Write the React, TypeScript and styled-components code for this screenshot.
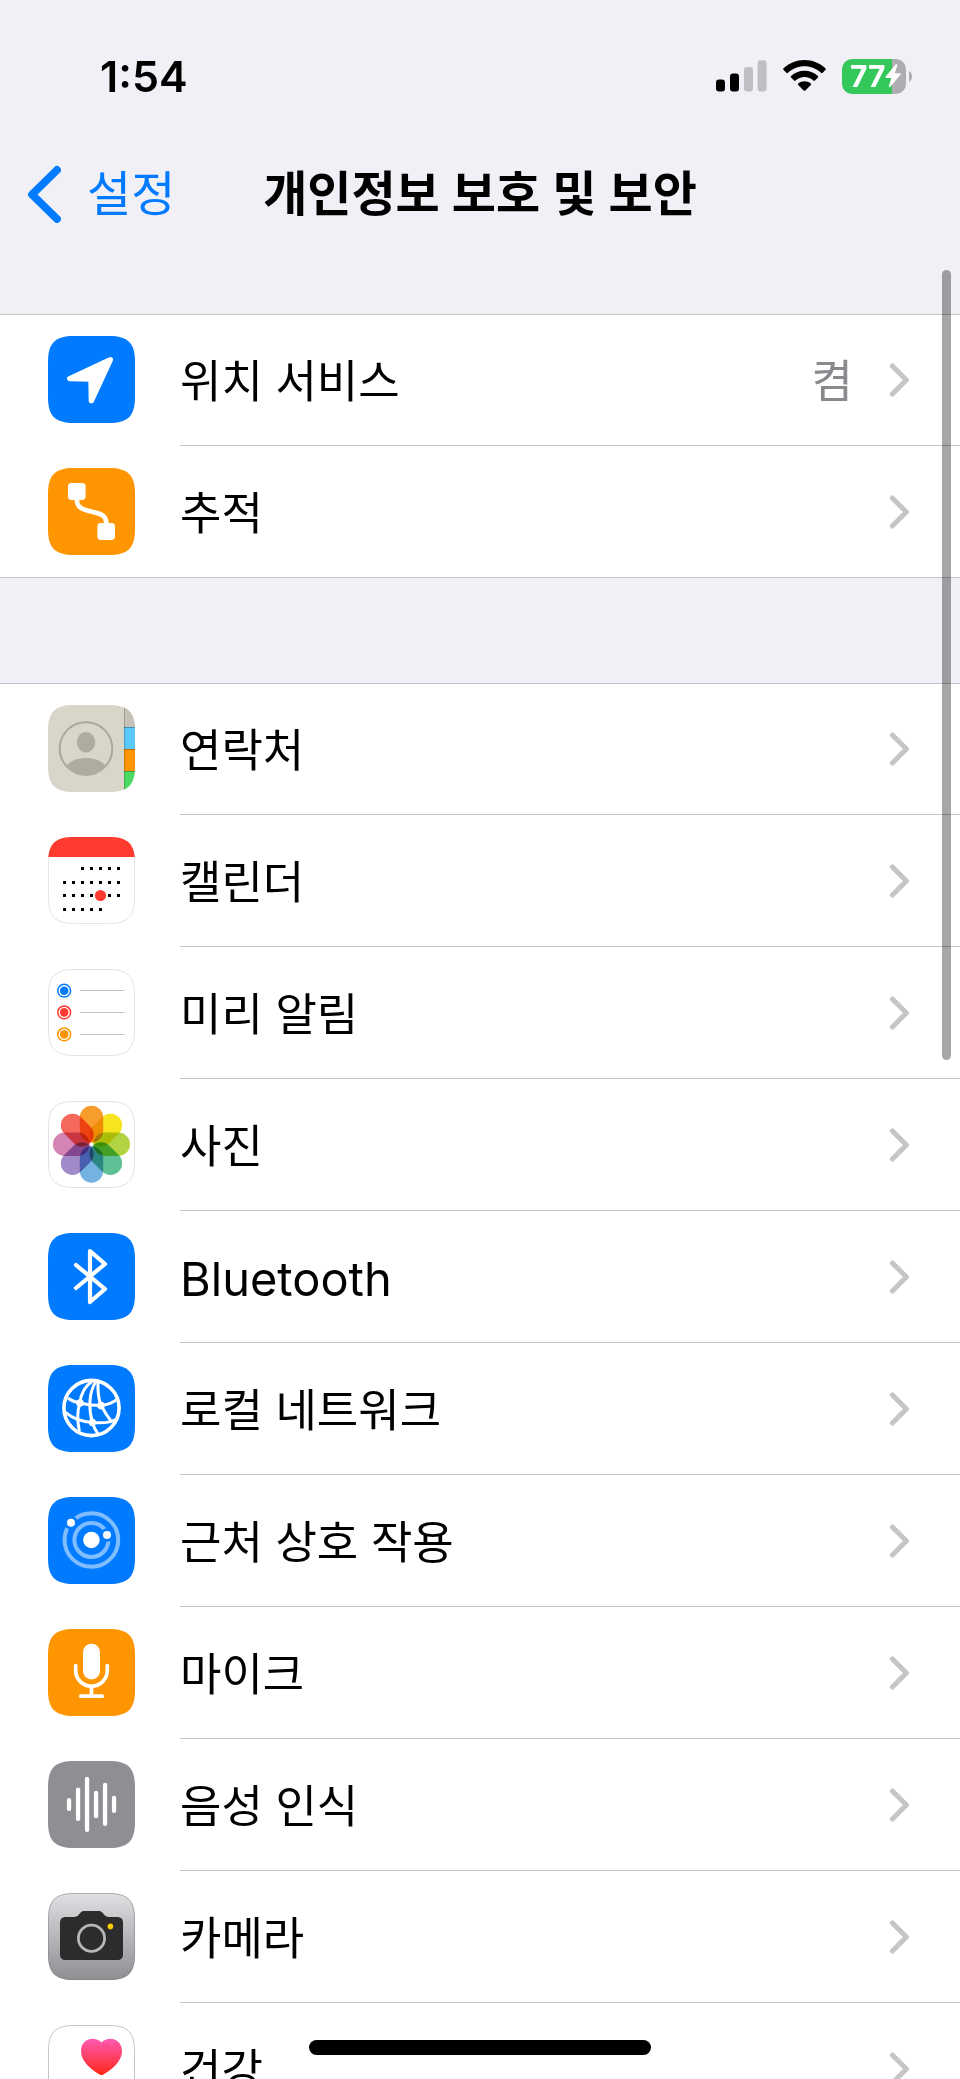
import React from "react";
import styled, { createGlobalStyle } from "styled-components";

const GlobalStyle = createGlobalStyle`
  *, *::before, *::after { box-sizing: border-box; }
  body {
    margin: 0;
    background: #f1f0f6;
    color: #000;
    font-family: Inter, "Noto Sans CJK KR", sans-serif;
  }
`;

const Screen = styled.div`
  position: relative;
  display: flex;
  flex-direction: column;
  height: 100vh;
  overflow: hidden;
`;

const StatusBar = styled.div`
  display: flex;
  align-items: center;
  justify-content: space-between;
  padding: 52px 48px 0 100px;
`;

const Clock = styled.time`
  font-size: 43px;
  line-height: 48px;
  font-weight: 600;
`;

const StatusIcons = styled.div`
  display: flex;
  align-items: center;
  gap: 16px;
`;

const Battery = styled.div`
  display: flex;
  align-items: center;
  gap: 3px;
`;

const BatteryBody = styled.div<{ $level: number }>`
  display: flex;
  align-items: center;
  width: 64px;
  height: 35px;
  padding-left: 8px;
  border-radius: 10px;
  background: linear-gradient(
    to right,
    #34c759 ${(p) => p.$level}%,
    #aeaeb2 ${(p) => p.$level}%
  );
  color: #fff;
  font-size: 30px;
  line-height: 35px;
  font-weight: 700;
`;

const NavBar = styled.header`
  display: grid;
  grid-template-columns: 1fr auto 1fr;
  align-items: center;
  height: 72px;
  margin: 58px 0 84px;
  padding: 0 27px;
`;

const BackLink = styled.a`
  display: flex;
  align-items: center;
  gap: 26px;
  color: #007aff;
  font-size: 48px;
  line-height: 72px;
  text-decoration: none;
`;

const Title = styled.h1`
  margin: 0;
  font-size: 48px;
  line-height: 72px;
  font-weight: 600;
`;

const Content = styled.main`
  display: flex;
  flex: 1;
  flex-direction: column;
  gap: 105px;
  min-height: 0;
  overflow: hidden;
`;

const Group = styled.ul`
  flex: none;
  margin: 0;
  padding: 0;
  list-style: none;
  background: #fff;
  box-shadow: inset 0 1px 0 #c3c3c6;
`;

const Row = styled.li`
  &:last-child > a {
    border-bottom: 1px solid #c3c3c6;
  }
  &:last-child > a > div {
    border-bottom: 0;
  }
`;

const RowLink = styled.a`
  display: flex;
  align-items: stretch;
  gap: 45px;
  height: 132px;
  padding-left: 48px;
  color: inherit;
  text-decoration: none;
`;

const IconTile = styled.svg`
  flex: none;
  width: 87px;
  height: 87px;
  margin-top: 22px;
`;

const RowBody = styled.div`
  display: flex;
  flex: 1;
  align-items: center;
  padding-right: 50px;
  border-bottom: 1px solid #c3c3c6;
`;

const Label = styled.span<{ $latin?: boolean }>`
  flex: 1;
  padding-top: 4px;
  font-size: ${(p) => (p.$latin ? 47 : 45)}px;
  line-height: 66px;
`;

const Value = styled.span`
  margin-right: 36px;
  padding-top: 4px;
  color: #8a8a8e;
  font-size: 45px;
  line-height: 66px;
`;

const ScrollThumb = styled.div`
  position: absolute;
  top: 270px;
  right: 9px;
  width: 9px;
  height: 38%;
  border-radius: 5px;
  background: rgba(0, 0, 0, 0.35);
`;

const HomeIndicator = styled.div`
  position: absolute;
  bottom: 24px;
  left: 50%;
  width: 342px;
  height: 15px;
  margin-left: -171px;
  border-radius: 8px;
  background: #000;
`;

const TILE =
  "M0 26 C0 7 7 0 26 0 H61 C80 0 87 7 87 26 V61 C87 80 80 87 61 87 H26 C7 87 0 80 0 61 Z";
const TILE_EDGE =
  "M.5 26 C.5 7.5 7.5 .5 26 .5 H61 C79.5 .5 86.5 7.5 86.5 26 V61 C86.5 79.5 79.5 86.5 61 86.5 H26 C7.5 86.5 .5 79.5 .5 61 Z";

type TileProps = {
  fill: string;
  edge?: string;
  children: React.ReactNode;
};

function Tile({ fill, edge, children }: TileProps) {
  return (
    <IconTile viewBox="0 0 87 87" aria-hidden="true">
      <path d={TILE} fill={fill} />
      {edge && <path d={TILE_EDGE} fill="none" stroke={edge} />}
      {children}
    </IconTile>
  );
}

const LocationIcon = () => (
  <Tile fill="#007aff">
    <path
      d="M62.4 23.6 L21.8 42.6 L43 43.1 L43.4 64.6 Z"
      fill="#fff"
      stroke="#fff"
      strokeWidth="5.4"
      strokeLinejoin="round"
    />
  </Tile>
);

const TrackingIcon = () => (
  <Tile fill="#ff9500">
    <rect x="20" y="15" width="17.6" height="17" rx="3.4" fill="#fff" />
    <rect x="49.4" y="55" width="17.6" height="17" rx="3.4" fill="#fff" />
    <path
      d="M28.8 31 C28.8 38 32 40.6 39 42.4 L48 44.8 C55 46.6 58.4 49 58.4 56"
      fill="none"
      stroke="#fff"
      strokeWidth="4.6"
    />
  </Tile>
);

const ContactsIcon = () => (
  <Tile fill="#d8d5c9">
    <clipPath id="contacts-tile">
      <path d={TILE} />
    </clipPath>
    <clipPath id="contacts-face">
      <circle cx="38" cy="43.5" r="27" />
    </clipPath>
    <g clipPath="url(#contacts-tile)">
      <rect x="76" y="0" width="11" height="22" fill="#c5c2b8" />
      <rect x="76" y="22" width="11" height="22" fill="#5ac8fa" />
      <rect x="76" y="44" width="11" height="22" fill="#ff9500" />
      <rect x="76" y="66" width="11" height="21" fill="#4cd964" />
      <path d="M76 22.5 H87 M76 44.5 H87 M76 66.5 H87" stroke="#000" strokeOpacity=".28" />
      <path d="M76.5 0 V87" stroke="#000" strokeOpacity=".2" />
    </g>
    <circle cx="38" cy="43.5" r="26.3" fill="none" stroke="#aca79c" strokeWidth="2" />
    <ellipse cx="38" cy="37.3" rx="9.2" ry="10.3" fill="#b0aba0" />
    <path
      d="M18 62 C24 50 52 50 58 62 V74 H18 Z"
      fill="#b0aba0"
      clipPath="url(#contacts-face)"
    />
  </Tile>
);

const CALENDAR_WEEKS = [
  { y: 31.5, from: 2, to: 6 },
  { y: 45.5, from: 0, to: 6 },
  { y: 58.5, from: 0, to: 6 },
  { y: 72.5, from: 0, to: 4 },
];

const CalendarIcon = () => (
  <Tile fill="#fff" edge="#e5e5e7">
    {CALENDAR_WEEKS.map((week) =>
      Array.from({ length: week.to - week.from + 1 }, (_, i) => (
        <rect
          key={`${week.y}-${i}`}
          x={15 + (week.from + i) * 9}
          y={week.y - 1.5}
          width="3"
          height="3"
        />
      ))
    )}
    <circle cx="52.5" cy="58.5" r="5.6" fill="#ff3b30" />
    <clipPath id="calendar-head">
      <rect width="87" height="20" />
    </clipPath>
    <path d={TILE} fill="#ff3b30" clipPath="url(#calendar-head)" />
  </Tile>
);

const REMINDERS = [
  { y: 21.7, color: "#007aff" },
  { y: 43.4, color: "#ff3b30" },
  { y: 65.4, color: "#ff9500" },
];

const RemindersIcon = () => (
  <Tile fill="#fff" edge="#e2e2e4">
    {REMINDERS.map(({ y, color }) => (
      <g key={color}>
        <circle cx="16.2" cy={y} r="6.4" fill="none" stroke={color} strokeWidth="1.5" />
        <circle cx="16.2" cy={y} r="4.3" fill={color} />
        <path d={`M32 ${Math.floor(y) + 0.5} H76.5`} stroke="#c2c2c4" />
      </g>
    ))}
  </Tile>
);

const PETALS = [
  "#f79d2b",
  "#f6e41f",
  "#b2d442",
  "#5fc095",
  "#74b2e2",
  "#a08ac8",
  "#d383b4",
  "#f4695c",
];

const PhotosIcon = () => (
  <Tile fill="#fff" edge="#e2e2e4">
    {PETALS.map((color, i) => (
      <rect
        key={color}
        x="31.8"
        y="4.8"
        width="23.4"
        height="36.6"
        rx="11.7"
        fill={color}
        transform={`rotate(${i * 45} 43.5 43.3)`}
        style={{ mixBlendMode: "multiply" }}
      />
    ))}
  </Tile>
);

const BluetoothIcon = () => (
  <Tile fill="#007aff">
    <path
      d="M28 32 L57 56 L42 69 V18 L57 31 L28 55"
      fill="none"
      stroke="#fff"
      strokeWidth="4.2"
      strokeLinecap="round"
      strokeLinejoin="round"
    />
  </Tile>
);

const NetworkIcon = () => (
  <Tile fill="#007aff">
    <g fill="none" stroke="#fff" strokeWidth="3">
      <circle cx="43.5" cy="43" r="27.6" strokeWidth="3.6" />
      <path d="M20 33 C23 35.5 27 37 32 38 C39 39.8 46 40.6 53 40.6 C60 39.6 65 37.6 69 34.4" />
      <path d="M44 16.5 C37 21 33 29 31.8 38 C29 47 29.6 58 31.4 66" />
      <path d="M48 16.5 C40 28 41 46 44.4 57.6 C45.6 62 48 66 50 69" />
      <path d="M50 17 C49.6 26 50.6 34 53 40.6 C56 46 59 51 64 57.4" />
      <path d="M17.4 47.4 C25 53.6 34 57 44.4 57.4 C53 58.4 62 58 69 54" />
    </g>
    <circle cx="32" cy="38" r="3.8" fill="#fff" />
    <circle cx="53" cy="40.6" r="3.8" fill="#fff" />
    <circle cx="44.4" cy="57.4" r="3.6" fill="#fff" />
  </Tile>
);

const NearbyIcon = () => (
  <Tile fill="#007aff">
    <mask id="nearby-gaps" maskUnits="userSpaceOnUse" x="0" y="0" width="87" height="87">
      <rect width="87" height="87" fill="#fff" />
      <circle cx="23" cy="25.7" r="6.8" fill="#000" />
      <circle cx="59" cy="38" r="6.8" fill="#000" />
    </mask>
    <g
      fill="none"
      stroke="#fff"
      strokeOpacity=".5"
      strokeWidth="4"
      mask="url(#nearby-gaps)"
    >
      <circle cx="43.4" cy="43" r="26.8" />
      <circle cx="43.4" cy="43" r="17" />
    </g>
    <circle cx="43.4" cy="43" r="8.3" fill="#fff" />
    <circle cx="23" cy="25.7" r="4" fill="#fff" />
    <circle cx="59" cy="38" r="4" fill="#fff" />
  </Tile>
);

const MicrophoneIcon = () => (
  <Tile fill="#ff9500">
    <rect x="35" y="14.8" width="17" height="35.6" rx="8.5" fill="#fff" />
    <path
      d="M27.7 36.5 V41.5 A15.8 15.8 0 0 0 59.3 41.5 V36.5 M43.5 58 V67 M32.8 67.2 H54.2"
      fill="none"
      stroke="#fff"
      strokeWidth="3.7"
      strokeLinecap="round"
    />
  </Tile>
);

const SPEECH_BARS = [
  [37, 50],
  [26.4, 60],
  [15.8, 71],
  [29.8, 57.3],
  [21.8, 65],
  [34.8, 52],
];

const SpeechIcon = () => (
  <Tile fill="#8e8e93">
    {SPEECH_BARS.map(([top, bottom], i) => (
      <rect
        key={top}
        x={18.9 + i * 9}
        y={top}
        width="4.3"
        height={bottom - top}
        rx="2.1"
        fill="#fff"
      />
    ))}
  </Tile>
);

const CameraIcon = () => (
  <Tile fill="url(#camera-metal)" edge="rgba(120, 120, 125, .45)">
    <linearGradient id="camera-metal" x1="0" y1="0" x2="0" y2="1">
      <stop offset="0" stopColor="#e0e0e3" />
      <stop offset="1" stopColor="#8e8e93" />
    </linearGradient>
    <path
      d="M18 24 H26 C29.5 24 30.5 22 32 20.3 C33.3 18.6 34.6 18 37 18 H50 C52.4 18 53.7 18.6 55 20.3 C56.5 22 57.5 24 61 24 H69 C73 24 75 26 75 30 V61 C75 65 73 67 69 67 H18 C14 67 12 65 12 61 V30 C12 26 14 24 18 24 Z"
      fill="#2c2c2c"
    />
    <circle cx="43.5" cy="45.3" r="13.1" fill="none" stroke="#b7b7b9" strokeWidth="2.8" />
    <circle cx="62.4" cy="33.4" r="2.8" fill="#ffcc00" />
  </Tile>
);

const HealthIcon = () => (
  <Tile fill="#fff" edge="#c4c4c6">
    <linearGradient id="health-heart" x1="0" y1="0" x2="0" y2="1">
      <stop offset="0" stopColor="#fb5bb4" />
      <stop offset="1" stopColor="#ff2616" />
    </linearGradient>
    <path
      d="M53.5 17.4 C56 15 59 13.8 62.5 13.8 C69 13.8 74 19 74 26 C74 37 63 45 55.3 49.5 Q53.5 50.6 51.7 49.5 C44 45 33 37 33 26 C33 19 38 13.8 44.5 13.8 C48 13.8 51 15 53.5 17.4 Z"
      fill="url(#health-heart)"
    />
  </Tile>
);

const Chevron = () => (
  <svg width="21" height="36" viewBox="0 0 21 36" aria-hidden="true">
    <path
      d="M3.4 4 L17.4 18 L3.4 32"
      fill="none"
      stroke="#c5c5c7"
      strokeWidth="5"
      strokeLinecap="round"
      strokeLinejoin="round"
    />
  </svg>
);

const BackChevron = () => (
  <svg width="34" height="58" viewBox="0 0 34 58" aria-hidden="true">
    <path
      d="M30 5 L5 29.5 L30 54"
      fill="none"
      stroke="#007aff"
      strokeWidth="7.8"
      strokeLinecap="round"
      strokeLinejoin="round"
    />
  </svg>
);

const SignalIcon = () => (
  <svg width="51" height="32" viewBox="0 0 51 32" aria-hidden="true">
    <rect x="0" y="19.5" width="9" height="12" rx="3" />
    <rect x="14" y="13.5" width="9" height="18" rx="3" />
    <rect x="28" y="7" width="9" height="24.5" rx="3" fill="#bfbec4" />
    <rect x="41.6" y=".2" width="9" height="31.3" rx="3" fill="#bfbec4" />
  </svg>
);

const WifiIcon = () => (
  <svg width="43" height="32" viewBox="0 0 43 32" aria-hidden="true">
    <path d="M21.5 0 C29.6 0 37 3.1 42.4 8.3 Q43.2 9.2 42.4 10 L39.6 12.8 Q38.8 13.5 38 12.8 C33.6 8.7 27.9 6.3 21.5 6.3 C15.1 6.3 9.4 8.7 5 12.8 Q4.2 13.5 3.4 12.8 L.6 10 Q-.2 9.2 .6 8.3 C6 3.1 13.4 0 21.5 0 Z" />
    <path d="M21.5 10.7 C26.7 10.7 31.4 12.7 34.9 16 Q35.7 16.8 34.9 17.6 L32 20.4 Q31.2 21.1 30.4 20.4 C28 18.3 24.9 17 21.5 17 C18.1 17 15 18.3 12.6 20.4 Q11.8 21.1 11 20.4 L8.1 17.6 Q7.3 16.8 8.1 16 C11.6 12.7 16.3 10.7 21.5 10.7 Z" />
    <path d="M21.5 21.3 C23.9 21.3 26 22.1 27.7 23.5 Q28.6 24.3 27.8 25.1 L22.4 30.4 Q21.5 31.2 20.6 30.4 L15.2 25.1 Q14.4 24.3 15.3 23.5 C17 22.1 19.1 21.3 21.5 21.3 Z" />
  </svg>
);

const BoltIcon = () => (
  <svg width="16" height="24" viewBox="0 0 16 24" aria-hidden="true">
    <path
      d="M10.6 .6 L.8 12.6 Q0 13.8 1.4 14 H6.3 L3.8 22.2 Q4 23.8 5.4 22.8 L15.4 10.8 Q16.2 9.4 14.8 9.2 H9.8 L12.2 1.6 Q12.2 -.4 10.6 .6 Z"
      fill="#fff"
    />
  </svg>
);

const BatteryTip = () => (
  <svg width="3" height="11" viewBox="0 0 3 11" aria-hidden="true">
    <path d="M0 0 C4 2 4 9 0 11 Z" fill="#aeaeb2" />
  </svg>
);

type Item = {
  label: string;
  latin?: boolean;
  value?: string;
  Icon: () => React.ReactElement;
};

const GROUPS: Item[][] = [
  [
    { label: "위치 서비스", value: "켬", Icon: LocationIcon },
    { label: "추적", Icon: TrackingIcon },
  ],
  [
    { label: "연락처", Icon: ContactsIcon },
    { label: "캘린더", Icon: CalendarIcon },
    { label: "미리 알림", Icon: RemindersIcon },
    { label: "사진", Icon: PhotosIcon },
    { label: "Bluetooth", latin: true, Icon: BluetoothIcon },
    { label: "로컬 네트워크", Icon: NetworkIcon },
    { label: "근처 상호 작용", Icon: NearbyIcon },
    { label: "마이크", Icon: MicrophoneIcon },
    { label: "음성 인식", Icon: SpeechIcon },
    { label: "카메라", Icon: CameraIcon },
    { label: "건강", Icon: HealthIcon },
  ],
];

export default function App() {
  return (
    <Screen lang="ko">
      <GlobalStyle />
      <StatusBar>
        <Clock>1:54</Clock>
        <StatusIcons>
          <SignalIcon />
          <WifiIcon />
          <Battery>
            <BatteryBody $level={78}>
              77
              <BoltIcon />
            </BatteryBody>
            <BatteryTip />
          </Battery>
        </StatusIcons>
      </StatusBar>
      <NavBar>
        <BackLink href="#settings">
          <BackChevron />
          설정
        </BackLink>
        <Title>개인정보 보호 및 보안</Title>
      </NavBar>
      <Content>
        {GROUPS.map((items) => (
          <Group key={items[0].label}>
            {items.map(({ label, latin, value, Icon }) => (
              <Row key={label}>
                <RowLink href="#detail">
                  <Icon />
                  <RowBody>
                    <Label $latin={latin}>{label}</Label>
                    {value && <Value>{value}</Value>}
                    <Chevron />
                  </RowBody>
                </RowLink>
              </Row>
            ))}
          </Group>
        ))}
      </Content>
      <ScrollThumb />
      <HomeIndicator />
    </Screen>
  );
}
